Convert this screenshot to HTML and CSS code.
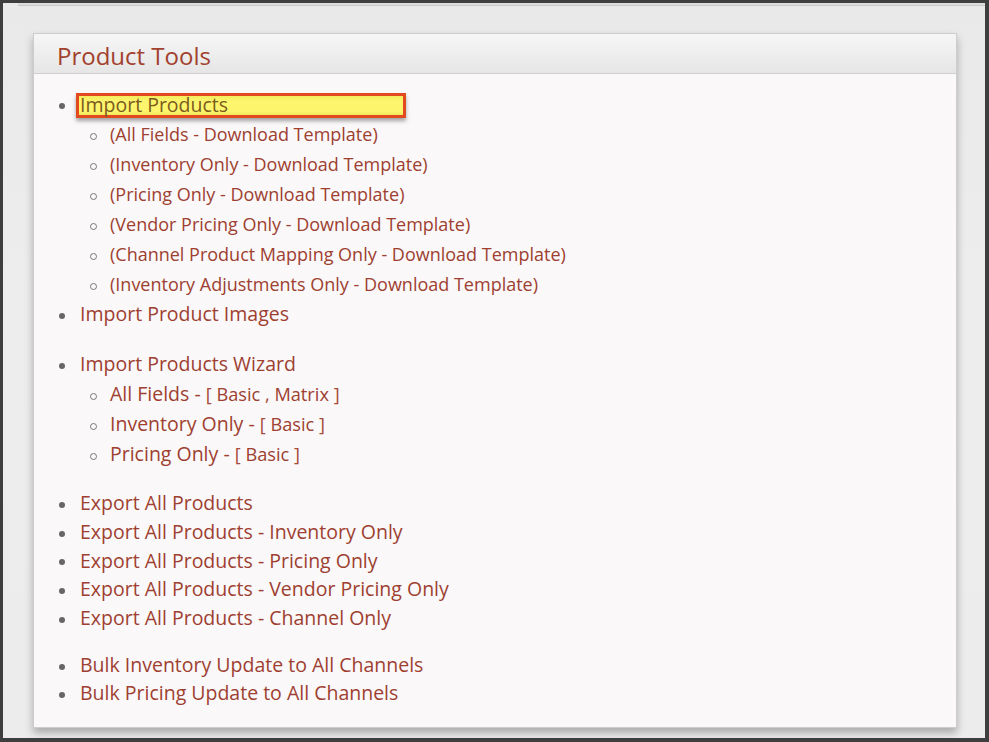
FILE: index.html
```html
<!DOCTYPE html>
<html>
<head>
<meta charset="utf-8">
<link rel="stylesheet" href="styles.css">
</head>
<body>
<div class="frame">
  <div class="prev-edge"></div>
  <div class="panel">
    <div class="panel-head"><h2 class="title">Product Tools</h2></div>
    <div class="panel-body">
      <ul class="list group-a">
        <li><span class="hl">Import Products</span>
          <ul class="sub">
            <li><a class="link">(All Fields - Download Template)</a></li>
            <li><a class="link">(Inventory Only - Download Template)</a></li>
            <li><a class="link">(Pricing Only - Download Template)</a></li>
            <li><a class="link">(Vendor Pricing Only - Download Template)</a></li>
            <li><a class="link">(Channel Product Mapping Only - Download Template)</a></li>
            <li><a class="link">(Inventory Adjustments Only - Download Template)</a></li>
          </ul>
        </li>
        <li><a class="link">Import Product Images</a></li>
      </ul>
      <ul class="list group-b">
        <li><a class="link">Import Products Wizard</a>
          <ul class="sub">
            <li><span class="label">All Fields - </span><span class="opts">[ <a class="link">Basic</a> , <a class="link">Matrix</a> ]</span></li>
            <li><span class="label">Inventory Only - </span><span class="opts">[ <a class="link">Basic</a> ]</span></li>
            <li><span class="label">Pricing Only - </span><span class="opts">[ <a class="link">Basic</a> ]</span></li>
          </ul>
        </li>
      </ul>
      <ul class="list group-c">
        <li><a class="link">Export All Products</a></li>
        <li><a class="link">Export All Products - Inventory Only</a></li>
        <li><a class="link">Export All Products - Pricing Only</a></li>
        <li><a class="link">Export All Products - Vendor Pricing Only</a></li>
        <li><a class="link">Export All Products - Channel Only</a></li>
      </ul>
      <ul class="list group-d">
        <li><a class="link">Bulk Inventory Update to All Channels</a></li>
        <li><a class="link">Bulk Pricing Update to All Channels</a></li>
      </ul>
    </div>
  </div>
</div>
</body>
</html>
```

FILE: styles.css
```css
html, body {
  margin: 0;
  padding: 0;
  background: #3e3e3e;
}
.frame {
  box-sizing: border-box;
  width: 989px;
  height: 742px;
  border: 3px solid #3e3e3e;
  border-right-width: 4px;
  border-bottom-width: 4px;
  background: linear-gradient(#e9e9e9, #ededed 40%, #ececec);
  font-family: "Open Sans", "Liberation Sans", sans-serif;
  overflow: hidden;
}
.prev-edge {
  height: 2px;
  margin-left: 15px;
  border-bottom: 1px solid #c8c8c8;
  background: #dcdcdc;
}
.panel {
  width: 922px;
  margin: 27px 0 0 30px;
  border: 1px solid #cdcdcd;
  background: #faf8f8;
  box-shadow: 0 5px 8px rgba(0, 0, 0, 0.28);
}
.panel-head {
  height: 39px;
  border-bottom: 1px solid #cfcfcf;
  background: linear-gradient(#f6f6f6, #e6e6e6);
  display: flex;
  align-items: center;
  padding-left: 23px;
}
.title {
  margin: 0;
  font-size: 24px;
  font-weight: 400;
  color: #a2412d;
  line-height: 1;
  padding-top: 4px;
}
.panel-body {
  padding: 15px 0 20px 0;
}
.list {
  list-style: none;
  margin: 0;
  padding: 0 0 0 46px;
  font-size: 19.5px;
}
.list > li::before {
  content: "";
  display: inline-block;
  width: 6px;
  height: 6px;
  border-radius: 50%;
  background: #666;
  margin-left: -21px;
  margin-right: 15px;
  vertical-align: middle;
}
.group-a li, .group-b li { line-height: 30px; }
.group-b { margin-top: 20px; }
.group-c { margin-top: 20px; }
.group-c li { line-height: 28.75px; }
.group-d { margin-top: 18.25px; }
.group-d li { line-height: 28px; }
.sub {
  list-style: none;
  margin: 0;
  padding: 0 0 0 30px;
  font-size: 18px;
}
.sub > li::before {
  content: "";
  display: inline-block;
  box-sizing: border-box;
  width: 7px;
  height: 7px;
  border-radius: 50%;
  border: 1.5px solid #777;
  margin-left: -20.5px;
  margin-right: 13.5px;
  vertical-align: middle;
}
.link {
  color: #9e3f31;
  text-decoration: none;
}
.label {
  font-size: 19.5px;
  color: #9e3f31;
}
.opts {
  font-size: 18.2px;
  color: #a84a3a;
}
.hl {
  display: inline-block;
  box-sizing: border-box;
  width: 330px;
  height: 25px;
  line-height: 17px;
  margin-left: -4px;
  padding-left: 1px;
  border: 3px solid #e2491f;
  background: linear-gradient(#f3ec5e, #fdf66e 30%, #fdf56c 80%, #f1e85c);
  color: #7c5a1c;
  box-shadow: 0 3px 4px rgba(0, 0, 0, 0.35);
  vertical-align: middle;
}
```
